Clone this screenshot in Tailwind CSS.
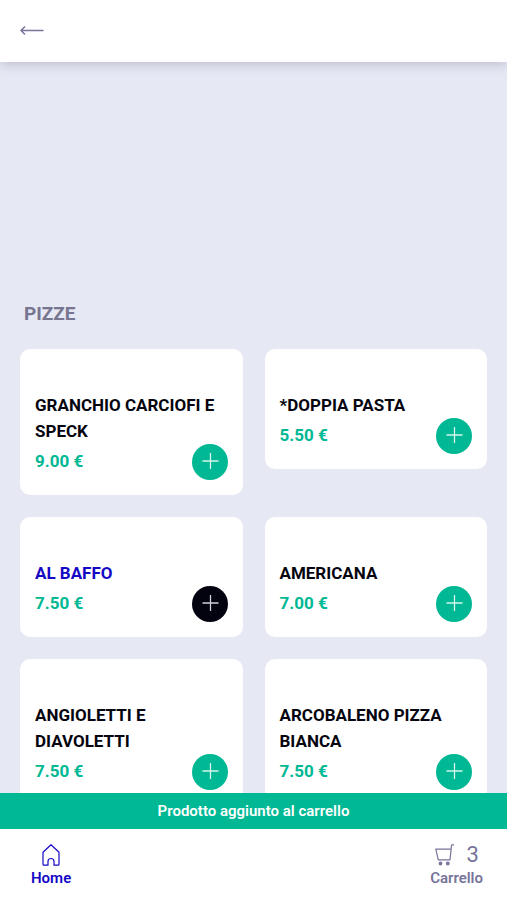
<!doctype html>
<html lang="it">
  <head>
    <meta charset="utf-8" />
    <meta name="viewport" content="width=device-width, initial-scale=1" />
    <title>Pizze</title>
    <script src="https://cdn.jsdelivr.net/npm/@tailwindcss/browser@4"></script>
  </head>
  <body
    class="flex h-dvh flex-col bg-[#e6e8f4] font-[Roboto,sans-serif] text-[#05050f]"
  >
    <header
      class="z-10 flex h-[62px] shrink-0 items-center bg-white px-5 shadow-[0_1px_12px_rgba(60,50,80,0.28)]"
    >
      <a href="#" aria-label="Indietro" class="text-[#77749a]">
        <svg
          width="24"
          height="12"
          viewBox="0 0 24 12"
          fill="none"
          stroke="currentColor"
          stroke-width="1.5"
          aria-hidden="true"
        >
          <path d="M23.500 5.500H1.500M5 1.500l-4 4 4 4" />
        </svg>
      </a>
    </header>

    <main
      class="min-h-0 flex-1 overflow-y-auto px-5 pt-[238px] pb-6 [scrollbar-width:none]"
    >
      <h1 class="px-1 text-[19px] leading-7 font-bold text-[#77758f]">
        PIZZE
      </h1>
      <ul class="mt-[21px] grid grid-cols-2 items-start gap-[22px]">
        <li class="rounded-[10px] bg-white px-[15px] pt-[43px] pb-[15px]">
          <h2 class="text-[17px] leading-[26px] font-bold">
            GRANCHIO CARCIOFI E SPECK
          </h2>
          <div class="flex items-center justify-between">
            <span class="text-[17px] font-bold text-[#00b894]">9.00 €</span>
            <button
              type="button"
              aria-label="Aggiungi Granchio carciofi e speck"
              class="flex size-9 cursor-pointer items-center justify-center rounded-full bg-[#00b894] text-[#d5f5ee]"
            >
              <svg width="18" height="18" viewBox="0 0 18 18" aria-hidden="true">
                <path stroke="currentColor" stroke-width="1.300" d="M9.500 0v16M1.500 8h16" />
              </svg>
            </button>
          </div>
        </li>
        <li class="rounded-[10px] bg-white px-[15px] pt-[43px] pb-[15px]">
          <h2 class="text-[17px] leading-[26px] font-bold">*DOPPIA PASTA</h2>
          <div class="flex items-center justify-between">
            <span class="text-[17px] font-bold text-[#00b894]">5.50 €</span>
            <button
              type="button"
              aria-label="Aggiungi Doppia pasta"
              class="flex size-9 cursor-pointer items-center justify-center rounded-full bg-[#00b894] text-[#d5f5ee]"
            >
              <svg width="18" height="18" viewBox="0 0 18 18" aria-hidden="true">
                <path stroke="currentColor" stroke-width="1.300" d="M9.500 0v16M1.500 8h16" />
              </svg>
            </button>
          </div>
        </li>
        <li class="rounded-[10px] bg-white px-[15px] pt-[43px] pb-[15px]">
          <h2 class="text-[17px] leading-[26px] font-bold text-[#1508c4]">
            AL BAFFO
          </h2>
          <div class="flex items-center justify-between">
            <span class="text-[17px] font-bold text-[#00b894]">7.50 €</span>
            <button
              type="button"
              aria-label="Aggiungi Al baffo"
              class="flex size-9 cursor-pointer items-center justify-center rounded-full bg-[#03020f] text-[#d0d0d8]"
            >
              <svg width="18" height="18" viewBox="0 0 18 18" aria-hidden="true">
                <path stroke="currentColor" stroke-width="1.300" d="M9.500 0v16M1.500 8h16" />
              </svg>
            </button>
          </div>
        </li>
        <li class="rounded-[10px] bg-white px-[15px] pt-[43px] pb-[15px]">
          <h2 class="text-[17px] leading-[26px] font-bold">AMERICANA</h2>
          <div class="flex items-center justify-between">
            <span class="text-[17px] font-bold text-[#00b894]">7.00 €</span>
            <button
              type="button"
              aria-label="Aggiungi Americana"
              class="flex size-9 cursor-pointer items-center justify-center rounded-full bg-[#00b894] text-[#d5f5ee]"
            >
              <svg width="18" height="18" viewBox="0 0 18 18" aria-hidden="true">
                <path stroke="currentColor" stroke-width="1.300" d="M9.500 0v16M1.500 8h16" />
              </svg>
            </button>
          </div>
        </li>
        <li class="rounded-[10px] bg-white px-[15px] pt-[43px] pb-[15px]">
          <h2 class="text-[17px] leading-[26px] font-bold">
            ANGIOLETTI E DIAVOLETTI
          </h2>
          <div class="flex items-center justify-between">
            <span class="text-[17px] font-bold text-[#00b894]">7.50 €</span>
            <button
              type="button"
              aria-label="Aggiungi Angioletti e diavoletti"
              class="flex size-9 cursor-pointer items-center justify-center rounded-full bg-[#00b894] text-[#d5f5ee]"
            >
              <svg width="18" height="18" viewBox="0 0 18 18" aria-hidden="true">
                <path stroke="currentColor" stroke-width="1.300" d="M9.500 0v16M1.500 8h16" />
              </svg>
            </button>
          </div>
        </li>
        <li class="rounded-[10px] bg-white px-[15px] pt-[43px] pb-[15px]">
          <h2 class="text-[17px] leading-[26px] font-bold">
            ARCOBALENO PIZZA BIANCA
          </h2>
          <div class="flex items-center justify-between">
            <span class="text-[17px] font-bold text-[#00b894]">7.50 €</span>
            <button
              type="button"
              aria-label="Aggiungi Arcobaleno pizza bianca"
              class="flex size-9 cursor-pointer items-center justify-center rounded-full bg-[#00b894] text-[#d5f5ee]"
            >
              <svg width="18" height="18" viewBox="0 0 18 18" aria-hidden="true">
                <path stroke="currentColor" stroke-width="1.300" d="M9.500 0v16M1.500 8h16" />
              </svg>
            </button>
          </div>
        </li>
      </ul>
    </main>

    <footer class="shrink-0">
      <p
        role="status"
        class="bg-[#00b894] py-2 text-center text-[15px] leading-5 font-semibold text-white"
      >
        Prodotto aggiunto al carrello
      </p>
      <nav
        class="flex h-[71px] items-start justify-between bg-white pt-[13px] pr-6 pl-[31px] text-[15px] leading-5 font-semibold"
      >
        <a href="#" class="flex flex-col items-center text-[#1508c4]">
          <span class="flex h-[26px] items-center">
            <svg
              width="18"
              height="22"
              viewBox="0 0 18 22"
              fill="none"
              stroke="currentColor"
              stroke-width="1.200"
              stroke-linejoin="round"
              aria-hidden="true"
            >
              <path
                d="M9 .8 1 8.200V20.200q0 1 1 1H6V17.500a3 3 0 0 1 6 0V21.200h4q1 0 1-1V8.200z"
              />
            </svg>
          </span>
          Home
        </a>
        <a href="#" class="flex flex-col items-center text-[#77749a]">
          <span class="flex h-[26px] items-center gap-3">
            <svg
              width="20"
              height="22"
              viewBox="0 0 20 22"
              fill="none"
              stroke="currentColor"
              stroke-width="1.200"
              stroke-linejoin="round"
              aria-hidden="true"
            >
              <path d="M20 .8h-1.600q-.8 0-.9.800L16 15.800H4.300L1.800 5.200h15.200" />
              <circle cx="6.500" cy="19.500" r="1.300" fill="currentColor" />
              <circle cx="13.800" cy="19.500" r="1.300" fill="currentColor" />
            </svg>
            <span class="text-[22px] leading-[26px] font-normal">3</span>
          </span>
          Carrello
        </a>
      </nav>
    </footer>
  </body>
</html>
